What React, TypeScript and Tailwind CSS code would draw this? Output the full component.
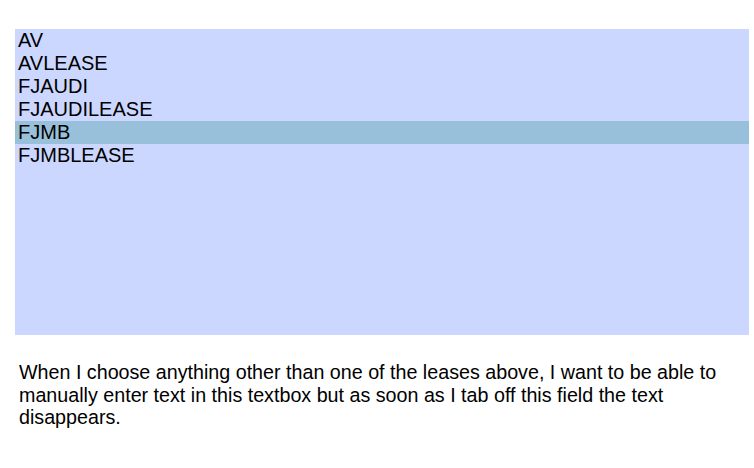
const leases = ["AV", "AVLEASE", "FJAUDI", "FJAUDILEASE", "FJMB", "FJMBLEASE"];

export default function App() {
  const selected = "FJMB";

  return (
    <div className="w-[754px] h-[468px] bg-white pl-[15px] pr-[5px] pt-[29px] font-['Liberation_Sans',Arial,sans-serif] text-black">
      <ul className="h-[306px] bg-[#ccd7ff]">
        {leases.map((lease) => (
          <li
            key={lease}
            className={`h-[23px] pl-[3px] text-[20px] leading-[23px] ${lease === selected ? "bg-[#99c0db]" : ""}`}
          >
            {lease}
          </li>
        ))}
      </ul>
      <p className="mt-[26px] pl-[4px] pr-[10px] text-[19.7px] leading-[22.5px]">
        When I choose anything other than one of the leases above, I want to be able to manually enter text in
        this textbox but as soon as I tab off this field the text disappears.
      </p>
    </div>
  );
}
